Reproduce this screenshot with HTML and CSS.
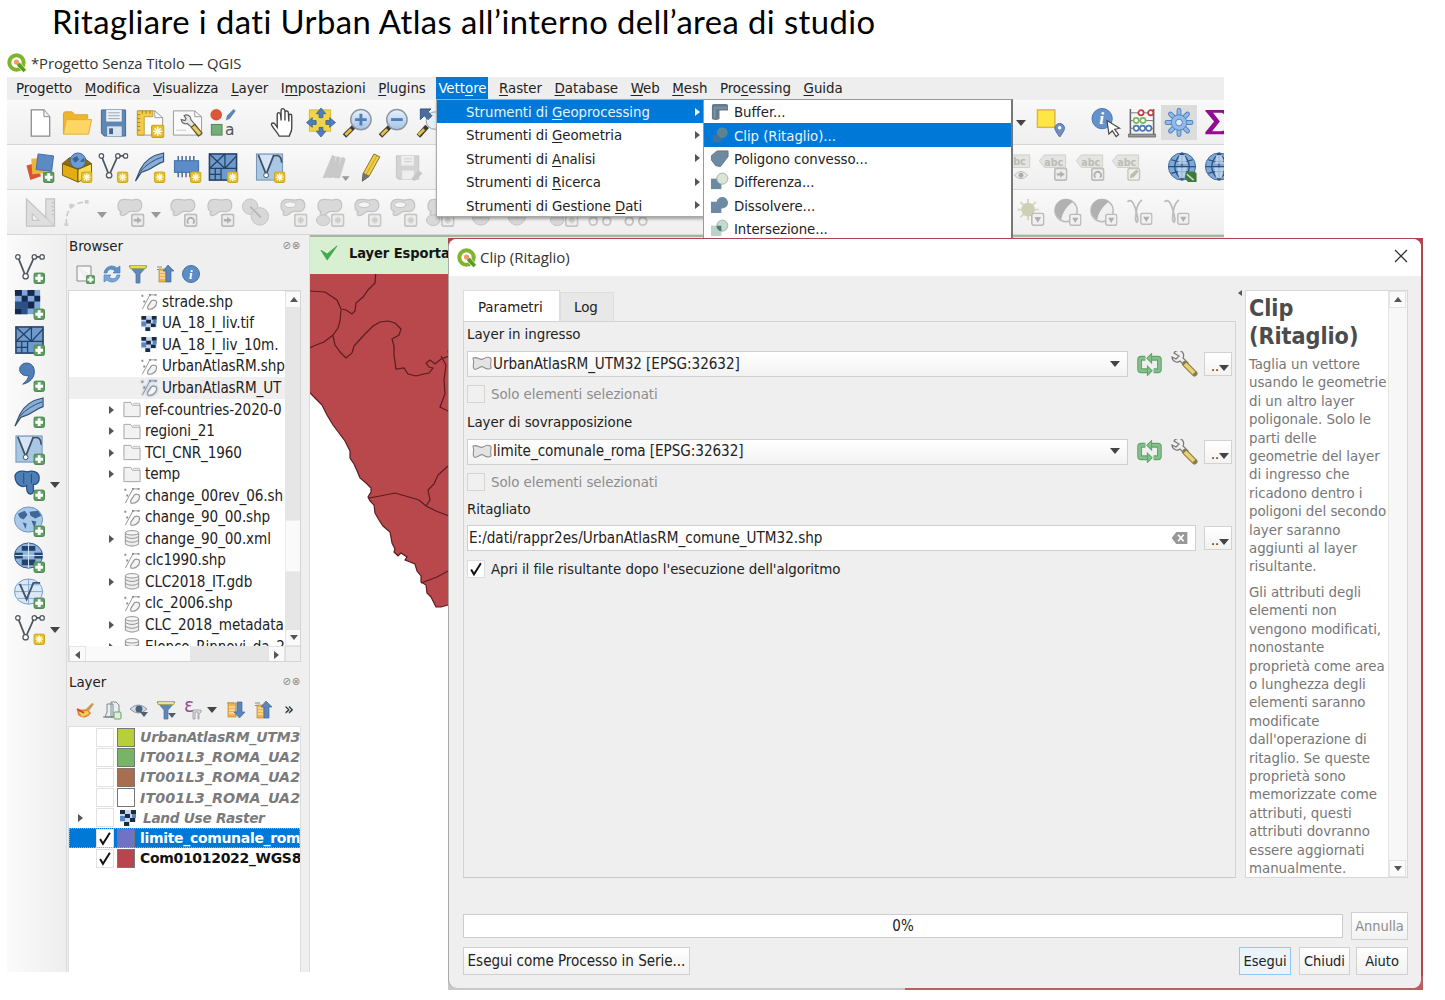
FILE: index.html
```html
<!DOCTYPE html>
<html lang="it">
<head>
<meta charset="utf-8">
<title>Ritagliare i dati Urban Atlas</title>
<link rel="stylesheet" href="styles.css">
</head>
<body>
<svg class="defs" aria-hidden="true">
  <defs>
    <linearGradient id="g-glass" x1="0" y1="0" x2="0" y2="1"><stop offset="0" stop-color="#e8f1fb"/><stop offset="1" stop-color="#a4c3e6"/></linearGradient>
  </defs>
  <symbol id="b-star" viewBox="0 0 12 12"><rect x=".5" y=".5" width="11" height="11" rx="2" fill="#e3bf2d" stroke="#c9a31c"/><path d="M6 2v8M2 6h8M3.2 3.2l5.6 5.6M8.8 3.2L3.2 8.8" stroke="#fffbe0" stroke-width="1.4"/></symbol>
  <symbol id="b-plus" viewBox="0 0 12 12"><rect x=".5" y=".5" width="11" height="11" rx="2" fill="#5f9e62" stroke="#4a8450"/><path d="M6 2v8M2 6h8" stroke="#fff" stroke-width="3"/></symbol>
  <symbol id="b-gray" viewBox="0 0 12 12"><rect x=".7" y=".7" width="10.6" height="10.6" rx="2" fill="#ededed" stroke="#c6c6c2" stroke-width="1.6"/><path d="M6 3v6M3 6h6M4 4l4 4M8 4l-4 4" stroke="#cfcfc8" stroke-width="1.200"/></symbol>
  <symbol id="b-arrow" viewBox="0 0 12 12"><rect x=".7" y=".7" width="10.6" height="10.6" rx="2" fill="#ececec" stroke="#bdbdbd" stroke-width="1.6"/><path d="M2.500 5h3V3l4 3-4 3V7h-3z" fill="#b0b0b0"/></symbol>
  <symbol id="b-down" viewBox="0 0 12 12"><rect x=".7" y=".7" width="10.6" height="10.6" rx="2" fill="#f1f1f1" stroke="#bbb" stroke-width="1.4"/><path d="M3 4h6L6 9z" fill="#b0b0b0"/></symbol>
  <symbol id="b-rot" viewBox="0 0 12 12"><rect x=".7" y=".7" width="10.6" height="10.6" rx="2" fill="#eeeeee" stroke="#bdbdbd" stroke-width="1.6"/><path d="M4 9a3 3 0 1 1 4 0" fill="none" stroke="#b0b0b0" stroke-width="1.600"/></symbol>
  <symbol id="qgis" viewBox="0 0 20 20"><circle cx="9.500" cy="9.500" r="7.200" fill="none" stroke="#7fb52d" stroke-width="4"/><path d="M9 9l4 .5L19.500 17l-3 2.500L10 13z" fill="#5d9a2c" stroke="#fff" stroke-width=".6"/><circle cx="9.500" cy="9" r="2.600" fill="#ee9b62"/></symbol>

  <symbol id="new" viewBox="0 0 32 32"><path d="M7 3h13l6 7v20H7z" fill="#fff" stroke="#8a8a8a" stroke-width="1.300"/><path d="M20 3v7h6" fill="#eee" stroke="#8a8a8a"/></symbol>
  <symbol id="open" viewBox="0 0 32 32"><path d="M2 28V7q0-2 2-2h7l3 3h13v4" fill="#f0b52c" stroke="#d9a32e"/><path d="M2 28L5 13h26l-3 15z" fill="#fdd663" stroke="#dfae35"/></symbol>
  <symbol id="save" viewBox="0 0 32 32"><path d="M4 3h25v27H7l-3-3z" fill="#5d87b5" stroke="#43699a"/><rect x="9" y="3" width="16" height="12" fill="#edf1f5"/><path d="M11 6h12M11 9h12M11 12h12" stroke="#9aa6b3"/><rect x="10" y="20" width="15" height="10" fill="#dce4ee"/><rect x="12" y="22" width="4" height="6" fill="#41658f"/></symbol>
  <symbol id="layout" viewBox="0 0 32 32"><path d="M3 4h18l8 7v18H3z" fill="#fff" stroke="#999"/><path d="M21 4v7h8" fill="none" stroke="#999"/><path d="M3 4h16v6H10v19H3z" fill="#f3cd49" stroke="#c29e2b"/><path d="M3 8h3M3 12h3M3 16h3M3 20h3M3 24h3M8 4v3M12 4v3M16 4v3" stroke="#9a7d20"/><use href="#b-star" x="17" y="18" width="14" height="14"/></symbol>
  <symbol id="manage" viewBox="0 0 32 32"><path d="M2 4h22l7 6v19H2z" fill="#fafafa" stroke="#999"/><path d="M24 4v6h7" fill="none" stroke="#999"/><path d="M5 24h10" stroke="#ccc"/><path d="M13 9a4.500 4.500 0 0 1 7 4l4 5-3 3-5-4a4.500 4.500 0 0 1-6-4l4 1 1-2z" fill="#e6e6e6" stroke="#666" stroke-width="1.200"/><path d="M22 19l8 10" stroke="#5c5230" stroke-width="6"/><path d="M22.500 20l7 8" stroke="#e8ca62" stroke-width="3.500"/></symbol>
  <symbol id="hand" viewBox="0 0 32 32"><path d="M11 30c-2-4-7-9-8-12 0-2 3-2 4 0l2 3V8c0-3 3-3 3.500 0l.5 6V4c0-3 3.500-3 4 0v10V6c0-3 3.500-2 3.500 0l.5 9V9c0-2 3-2 3 0v13c0 4-2 5-2.500 8z" fill="#fff" stroke="#444" stroke-width="1.400"/></symbol>
  <symbol id="pan" viewBox="0 0 32 32"><rect x="4" y="3" width="22" height="22" fill="#f3d444" stroke="#d3b83b"/><path d="M16 1l5 6h-3v4h-4V7h-3zM16 31l5-6h-3v-4h-4v4h-3zM1 16l6-5v3h4v4H7v3zM31 16l-6-5v3h-4v4h4v3z" fill="#4c7dbc" stroke="#2f5a94" stroke-width=".7"/></symbol>
  <symbol id="zin" viewBox="0 0 32 32"><path d="M12 20L2 30" stroke="#3c3a33" stroke-width="5"/><path d="M9 23l-6 6" stroke="#e3c04b" stroke-width="3"/><circle cx="19" cy="13" r="10.500" fill="url(#g-glass)" stroke="#8d97a3" stroke-width="1.500"/><path d="M19 7v12M13 13h12" stroke="#4c7dbc" stroke-width="3"/></symbol>
  <symbol id="zout" viewBox="0 0 32 32"><path d="M12 20L2 30" stroke="#3c3a33" stroke-width="5"/><path d="M9 23l-6 6" stroke="#e3c04b" stroke-width="3"/><circle cx="19" cy="13" r="10.500" fill="url(#g-glass)" stroke="#8d97a3" stroke-width="1.500"/><path d="M13 13h12" stroke="#4c7dbc" stroke-width="3"/></symbol>
  <symbol id="zfull" viewBox="0 0 32 32"><path d="M12 20L3 30" stroke="#3c3a33" stroke-width="5"/><path d="M9 23l-6 6" stroke="#e3c04b" stroke-width="3"/><circle cx="20" cy="14" r="9" fill="#e6eef7" stroke="#999"/><path d="M5 2h11l-3 3 4 4-4 4-4-4-4 4zM31 2v10l-9-9z" fill="#4a6f9c" stroke="#34547c"/></symbol>
  <symbol id="note" viewBox="0 0 32 32"><rect x="3" y="3" width="18" height="18" fill="#ffe644" stroke="#d8b73a" stroke-width="1.500"/><path d="M26 31c-5-7-5-8-5-9a5 5 0 0 1 10 0c0 1 0 2-5 9z" fill="#6f8fc0" stroke="#4c6fa5"/><circle cx="26" cy="21.500" r="1.800" fill="#fff"/></symbol>
  <symbol id="abacus" viewBox="0 0 32 32"><path d="M4 2v28M28 2v28" stroke="#666" stroke-width="1.600"/><path d="M2 28h28v3H2z" fill="#999" stroke="#555" stroke-width=".7"/><path d="M4 6h24M4 14h24M4 22h24" stroke="#777"/><g fill="#fff" stroke-width="1.700"><g stroke="#c33a45"><circle cx="15" cy="6" r="2.700"/><circle cx="25" cy="6" r="2.700"/></g><g stroke="#73bb62"><circle cx="10" cy="14" r="2.700"/><circle cx="17" cy="14" r="2.700"/></g><g stroke="#4f78b4"><circle cx="10" cy="22" r="2.700"/><circle cx="16.500" cy="22" r="2.700"/><circle cx="23" cy="22" r="2.700"/></g></g></symbol>
  <symbol id="gear" viewBox="0 0 32 32"><g stroke="#4e83bf" stroke-width="5" stroke-linecap="round"><path d="M16 3.500v25M3.500 16h25M7.200 7.200l17.600 17.600M24.800 7.200L7.200 24.800"/></g><g stroke="#90bbe8" stroke-width="3" stroke-linecap="round"><path d="M16 3.500v25M3.500 16h25M7.200 7.200l17.600 17.600M24.800 7.200L7.200 24.800"/></g><circle cx="16" cy="16" r="8" fill="#90bbe8" stroke="#4e83bf"/><circle cx="16" cy="16" r="3.500" fill="#dfeaf5" stroke="#4e83bf"/></symbol>
  <symbol id="sigma" viewBox="0 0 32 32"><path d="M5 3h22v7h-2c-1-4-2-4-5-4h-7l7 9-8 10h9c3 0 4-1 6-5h2l-2 8H5v-2l9-11-9-11z" fill="#930a93"/></symbol>

  <symbol id="dsm" viewBox="0 0 32 32"><path d="M2 14l11-3 4 14-11 4z" fill="#d9542f"/><path d="M7 7l13-1 1 16-13 1z" fill="#eab53c"/><path d="M14 2l16 2-2 16-16-2z" fill="#5c8ac4" stroke="#4370a9"/><use href="#b-plus" x="19" y="20" width="12" height="12"/></symbol>
  <symbol id="gpkg" viewBox="0 0 32 32"><path d="M1 12l7-6h15l8 6-14 6z" fill="#8d6d12" stroke="#6f5711"/><circle cx="17" cy="9" r="8" fill="#6f9bd1" stroke="#3d6597"/><path d="M11 7l5-3 2 4-4 3zM19 10l4-4 1 4z" fill="#3b618f"/><path d="M1 12l16 6v13L1 24z" fill="#e3ad12" stroke="#6f5711"/><path d="M17 18l14-6v12l-14 7z" fill="#f7dd52" stroke="#6f5711"/><use href="#b-star" x="20" y="20" width="12" height="12"/></symbol>
  <symbol id="vec" viewBox="0 0 32 32"><path d="M4 4l8 20L21 4h8" fill="none" stroke="#4d565e" stroke-width="1.800"/><g fill="#fff" stroke="#4d565e" stroke-width="1.300"><circle cx="4" cy="4" r="2.300"/><circle cx="12" cy="24" r="2.800"/><circle cx="21" cy="4" r="2.300"/><circle cx="29" cy="4" r="2.300"/></g></symbol>
  <symbol id="vec-star" viewBox="0 0 32 32"><use href="#vec"/><use href="#b-star" x="20" y="20" width="12" height="12"/></symbol>
  <symbol id="vec-plus" viewBox="0 0 32 32"><use href="#vec"/><use href="#b-plus" x="20" y="20" width="12" height="12"/></symbol>
  <symbol id="feather" viewBox="0 0 32 32"><path d="M1 30L6 18C11 8 19 3 30 1v9C22 12 20 18 7 21z" fill="#88aed9" stroke="#34526f" stroke-width="1.200"/><path d="M6 20C12 13 20 8 29 5" fill="none" stroke="#34526f"/></symbol>
  <symbol id="feather-star" viewBox="0 0 32 32"><use href="#feather"/><use href="#b-star" x="20" y="20" width="12" height="12"/></symbol>
  <symbol id="feather-plus" viewBox="0 0 32 32"><use href="#feather"/><use href="#b-plus" x="20" y="20" width="12" height="12"/></symbol>
  <symbol id="chip" viewBox="0 0 32 32"><path d="M7 4v22M11 4v22M15 4v22M19 4v22M23 4v22" stroke="#4d6f98" stroke-width="1.600"/><rect x="3" y="9" width="25" height="12" fill="#5b8cc8" stroke="#3f6ca3"/><use href="#b-star" x="19" y="20" width="12" height="12"/></symbol>
  <symbol id="mesh" viewBox="0 0 32 32"><rect x="2" y="2" width="28" height="27" fill="#6d9bd0" stroke="#26415f" stroke-width="1.600"/><path d="M2 17h28M18 2v15M14 17v12M2 2l16 15M18 2L2 17M18 17L30 4M2 23h12M8 17v12" stroke="#26415f" stroke-width="1.300" fill="none"/></symbol>
  <symbol id="mesh-star" viewBox="0 0 32 32"><use href="#mesh"/><use href="#b-star" x="20" y="20" width="12" height="12"/></symbol>
  <symbol id="mesh-plus" viewBox="0 0 32 32"><use href="#mesh"/><use href="#b-plus" x="20" y="20" width="12" height="12"/></symbol>
  <symbol id="virt" viewBox="0 0 32 32"><rect x="2" y="2" width="27" height="27" fill="#a9c6e4" stroke="#7393b3"/><path d="M4 3l8 20L20 3" fill="#d5e4f4" stroke="#3e5063" stroke-width="1.800"/><path d="M20 4q8-2 8 7" fill="none" stroke="#3e5063" stroke-width="1.500"/><circle cx="12" cy="24" r="2.500" fill="#fff" stroke="#3e5063"/></symbol>
  <symbol id="virt-star" viewBox="0 0 32 32"><use href="#virt"/><use href="#b-star" x="20" y="20" width="12" height="12"/></symbol>
  <symbol id="virt-plus" viewBox="0 0 32 32"><use href="#virt"/><use href="#b-plus" x="20" y="20" width="12" height="12"/></symbol>
  <symbol id="edits" viewBox="0 0 32 32"><path d="M2 27L12 3l4 2-6 21zM8 27L17 4l4 2-6 20zM14 27l8-22 4 2-6 20z" fill="#c9c9c9"/><path d="M22 25h8l-4 5z" fill="#999"/></symbol>
  <symbol id="pencil" viewBox="0 0 32 32"><path d="M5 30l1-8L17 2l6 3-11 20z" fill="#f0cf45" stroke="#85712a"/><path d="M5 30l1-8 6 3z" fill="#777" stroke="#666"/><path d="M9 23L20 4" stroke="#c09f27"/></symbol>
  <symbol id="saveg" viewBox="0 0 32 32"><path d="M3 4h23v24H5l-2-2z" fill="#d3d3d3" stroke="#c4c4c4"/><path d="M8 4h13v10H8zM9 19h12v9H9z" fill="#eee"/><path d="M11 7h8M11 10h8" stroke="#ccc"/><path d="M18 28l8-9 4 3-8 8z" fill="#c7c7c7"/></symbol>

  <symbol id="tri" viewBox="0 0 32 32"><path d="M2 2l20 19V2h9v28H2z" fill="#dedede" stroke="#c2c2c2" stroke-width="1.200"/><path d="M22 21l9 9" stroke="#c2c2c2"/><path d="M8 17v7h7z" fill="#f2f2f2" stroke="#bdbdbd"/><path d="M28 6h3M28 10h3M28 14h3M28 18h3" stroke="#bdbdbd"/></symbol>
  <symbol id="curve" viewBox="0 0 32 32"><path d="M5 29C4 14 10 6 26 5" fill="none" stroke="#c9c9c9" stroke-dasharray="6 3" stroke-width="1.600"/><path d="M3 27h4v3H3zM24 3h4v4h-4zM8 7h4v4H8z" fill="#cfcfcf"/></symbol>
  <symbol id="blob" viewBox="0 0 32 32"><path d="M7 3c4-2 8 1 12 0s8-1 9 4-2 8-6 8-6-1-8 1-4 4-7 3c-2-1-1-3 0-4-4-1-5-9 0-12z" fill="#d9d9d9" stroke="#c3c3c3" stroke-width="1.300"/></symbol>
  <symbol id="blob-arrow" viewBox="0 0 32 32"><use href="#blob"/><use href="#b-arrow" x="17" y="17" width="14" height="14"/></symbol>
  <symbol id="blob-rot" viewBox="0 0 32 32"><use href="#blob"/><use href="#b-rot" x="17" y="17" width="14" height="14"/></symbol>
  <symbol id="blob-gray" viewBox="0 0 32 32"><use href="#blob"/><use href="#b-arrow" x="17" y="17" width="14" height="14"/></symbol>
  <symbol id="simpl" viewBox="0 0 32 32"><circle cx="10" cy="10" r="8" fill="#d8d8d8" stroke="#c4c4c4"/><circle cx="20" cy="20" r="9" fill="#d8d8d8" stroke="#c4c4c4"/><path d="M10 10l11 11" stroke="#b5b5b5" stroke-width="2"/></symbol>
  <symbol id="ring" viewBox="0 0 32 32"><use href="#blob"/><ellipse cx="13" cy="8" rx="6" ry="3" fill="#f4f4f4" stroke="#c2c2c2"/><use href="#b-gray" x="17" y="17" width="14" height="14"/></symbol>
  <symbol id="part" viewBox="0 0 32 32"><use href="#blob"/><ellipse cx="9" cy="24" rx="7" ry="5.500" fill="#d8d8d8" stroke="#c2c2c2"/><use href="#b-gray" x="17" y="17" width="14" height="14"/></symbol>
  <symbol id="cut" viewBox="0 0 32 32"><circle cx="8" cy="25" r="4" fill="none" stroke="#c5c5c5" stroke-width="2"/><circle cx="22" cy="25" r="4" fill="none" stroke="#c5c5c5" stroke-width="2"/><path d="M10 22L22 4M20 22L9 4" stroke="#c5c5c5" stroke-width="2"/></symbol>
  <symbol id="tag" viewBox="0 0 32 32"><path d="M2 9l5-6h22v13H7z" fill="#e4e4e0" stroke="#cfcfcb"/></symbol>
  <symbol id="globe" viewBox="0 0 32 32"><circle cx="16" cy="15" r="14" fill="#7eaadb" stroke="#3e6796"/><path d="M2 15h28M5 8q11 4 22 0M5 22q11-4 22 0M16 1v28M16 1q-15 14 0 28M16 1q15 14 0 28" fill="none" stroke="#2c4d77" stroke-width="1.300"/><path d="M13 3h6l2 9h-9zM11 16h10l-2 11h-6z" fill="#cfe1f4" opacity=".7"/></symbol>
  <symbol id="globe-plug" viewBox="0 0 32 32"><use href="#globe"/><path d="M20 20h9l2 2v9h-9l-3-4z" fill="#3f7a3f"/><path d="M21 23l7 6" stroke="#cde5c6" stroke-width="1.500"/></symbol>
  <symbol id="sun" viewBox="0 0 32 32"><g stroke="#d6d6c2" stroke-width="2"><path d="M13 2v22M2 13h22M5 5l16 16M21 5L5 21"/></g><circle cx="13" cy="13" r="7" fill="#cfcfb4"/><use href="#b-down" x="16" y="16" width="14" height="14"/></symbol>
  <symbol id="contrast" viewBox="0 0 32 32"><circle cx="14" cy="14" r="11.500" fill="#f0f0f0" stroke="#bbb" stroke-width="1.500"/><path d="M5 20A11 11 0 0 1 21 5C14 10 10 17 9 24z" fill="#b1b1b1"/><use href="#b-down" x="17" y="17" width="13" height="13"/></symbol>
  <symbol id="gamma" viewBox="0 0 32 32"><path d="M2 5c4-4 7 2 9 10 0 5-2 10 1 11 2-2 0-8-1-11 1-6 3-10 6-12" fill="none" stroke="#bdbdbd" stroke-width="1.800"/><use href="#b-down" x="15" y="16" width="13" height="13"/></symbol>

  <symbol id="raster" viewBox="0 0 32 32"><rect x="1" y="1" width="26" height="25" fill="#7ea8dc"/><path d="M1 1h7v6H1zM14 1h7v6h-7zM8 7h6v6H8zM14 13h-6v7h6zM1 13h7v7H1zM8 20h6v6H8z" fill="#2c4f86"/><path d="M1 1h7v6H1zM14 1h7v6h-7zM8 7h6v6H8zM21 7h6v6h-6zM14 13h7v7h-7zM1 20h7v6H1z" fill="#16294b"/><use href="#b-plus" x="20" y="20" width="12" height="12"/></symbol>
  <symbol id="comma" viewBox="0 0 32 32"><path d="M6 7c2-7 15-7 15 4 0 6-4 11-12 13 4-4 6-6 6-9-6 1-10-3-9-8z" fill="#4f7fb8" stroke="#33598a"/><use href="#b-plus" x="20" y="20" width="12" height="12"/></symbol>
  <symbol id="pg" viewBox="0 0 32 32"><path d="M1 6c2-6 9-5 13-4 5-2 12 0 12 6 0 5-3 7-6 7 0 6 1 9-3 10-4-1-4-5-4-9-5 3-12-1-12-10z" fill="#4d7eb6" stroke="#27507f" stroke-width="1.300"/><path d="M10 3v11M18 4v10" stroke="#27507f"/><use href="#b-plus" x="20" y="20" width="12" height="12"/></symbol>
  <symbol id="wms" viewBox="0 0 32 32"><ellipse cx="15" cy="14" rx="14.500" ry="13" fill="#a9c9ea" stroke="#6c93bf"/><path d="M4 8l7-3 3 4-4 5-4-2zM16 6l9-1 3 5-6 3-5-3zM9 17l4 1-1 6zM18 15l5 1-2 7z" fill="#3e6897"/><use href="#b-plus" x="20" y="20" width="12" height="12"/></symbol>
  <symbol id="wcs" viewBox="0 0 32 32"><ellipse cx="15" cy="14" rx="14.500" ry="13" fill="#8db5e0" stroke="#33577f"/><path d="M8 4h14v5H8zM1 11h8v6H1zM21 11h8v6h-8zM8 18h14v6H8z" fill="#22436c"/><path d="M1 14h29M15 1v26" stroke="#d9e7f6"/><use href="#b-plus" x="20" y="20" width="12" height="12"/></symbol>
  <symbol id="wfs" viewBox="0 0 32 32"><ellipse cx="15" cy="14" rx="14.500" ry="13" fill="#dbe9f7" stroke="#6f9bcb"/><path d="M1 14h29M15 1v26M4 7h22M4 21h22" stroke="#7fa8d6" fill="none"/><path d="M6 6l7 16L20 5h7" fill="none" stroke="#41566b" stroke-width="2"/><use href="#b-plus" x="20" y="20" width="12" height="12"/></symbol>

  <symbol id="s-add" viewBox="0 0 20 20"><path d="M2 2h14v9M11 17H2V2" fill="#f7f7f7" stroke="#8b8b8b"/><use href="#b-plus" x="11" y="11" width="9" height="9"/></symbol>
  <symbol id="s-refresh" viewBox="0 0 20 20"><path d="M2 9C3 2 11 0 15 4l3-2v7h-7l2-2C9 4 6 5 5 9z" fill="#5d90cf" stroke="#4878b4" stroke-width=".6"/><path d="M18 11c-1 7-9 9-13 5l-3 2v-7h7l-2 2c4 3 7 2 8-2z" fill="#7aa6dc" stroke="#4878b4" stroke-width=".6"/></symbol>
  <symbol id="s-filter" viewBox="0 0 20 20"><path d="M1 2h18l-7 8v9H8v-9z" fill="#6187b6" stroke="#4b719f" stroke-width=".7"/><path d="M2 1.500h16v3H2z" fill="#e9dd3f" stroke="#a9a136" stroke-width=".7"/></symbol>
  <symbol id="s-filter-dd" viewBox="0 0 20 20"><path d="M1 2h18l-7 8v9H8v-9z" fill="#6187b6" stroke="#4b719f" stroke-width=".7"/><path d="M2 1.500h16v3H2z" fill="#e6e2a0" stroke="#a9a136" stroke-width=".7"/><path d="M12 13h8l-4 5z" fill="#555e68"/></symbol>
  <symbol id="s-collapse" viewBox="0 0 20 20"><path d="M2 3h5M2 5.500h2" stroke="#888"/><rect x="4" y="5" width="7" height="13" fill="#f0b24b" stroke="#b98a3a" stroke-width=".7"/><path d="M5 8h5M5 11h5M5 14h5" stroke="#fff4d6"/><path d="M13 1l6 6h-3v11h-5V7H8z" fill="#5b86ba" stroke="#426a9b" stroke-width=".7"/></symbol>
  <symbol id="s-expand" viewBox="0 0 20 20"><path d="M1 3h7" stroke="#888"/><rect x="2" y="3" width="8" height="14" fill="#f0b24b" stroke="#b98a3a" stroke-width=".7"/><path d="M3 7h6M3 10h6M3 13h6" stroke="#fff4d6"/><path d="M11 2h5v10h3l-5.500 6L8 12h3z" fill="#5b86ba" stroke="#426a9b" stroke-width=".7"/></symbol>
  <symbol id="s-brush" viewBox="0 0 20 20"><path d="M2 10c4-1 5 0 10-1l4 4c-3 5-9 6-13 2z" fill="#e5823b"/><path d="M4 12l9-1 1 3-7 3z" fill="#f1d252"/><path d="M2 9l7 4" stroke="#d4452f" stroke-width="2"/><path d="M11 9l6-6 2 1-5 7z" fill="#c99b55"/></symbol>
  <symbol id="s-group" viewBox="0 0 20 20"><path d="M5 4h6v13H3l2-5zM9 2h5l3 3v12H9z" fill="#e9eef0" stroke="#7e8c90"/><path d="M1 17h10" stroke="#777"/><rect x="12" y="12" width="7" height="7" rx="1" fill="#dcefd9" stroke="#6d9f6d"/></symbol>
  <symbol id="s-eye" viewBox="0 0 20 20"><path d="M1 9q8-8 17 0q-8 8-17 0z" fill="#d8dee5" stroke="#8794a3"/><circle cx="10" cy="9" r="3.500" fill="#49637f"/><path d="M11 12h8l-4 5z" fill="#555e68"/></symbol>

  <symbol id="t-shp" viewBox="0 0 20 20"><path d="M3 18L11 3h6" fill="none" stroke="#929292"/><path d="M9 18c-2-4 2-5 3-8 1-2 6-2 6 1 0 4-4 8-9 7z" fill="#f4f4f4" stroke="#929292" stroke-width="1.200"/><path d="M2 3h2v2H2zM4 9h2v2H4zM10 2h2v2h-2zM16 2h2v2h-2z" fill="#8a8a8a"/></symbol>
  <symbol id="t-ras" viewBox="0 0 20 20"><rect x="2" y="2" width="16" height="16" fill="#c3d6eb"/><path d="M2 2h5v4H2zM13 2h5v4h-5zM7 6h5v4H7zM12 10h5v4h-5zM6 14h5v4H6z" fill="#1a2b45"/><path d="M2 8h5v5H2zM14 6h4v4h-4z" fill="#5986c0"/><path d="M12 14h6v4h-6zM2 14h4v4H2z" fill="#fff"/></symbol>
  <symbol id="t-dir" viewBox="0 0 20 20"><path d="M1.500 17.500V2.500h7l2 3h8v12z" fill="#f2f2f2" stroke="#a2a2a2"/><path d="M11 3.500h7v2" fill="none" stroke="#bbb"/></symbol>
  <symbol id="t-db" viewBox="0 0 20 20"><path d="M3 4v12q7 4 14 0V4" fill="#eee" stroke="#909090"/><ellipse cx="10" cy="4" rx="7" ry="2.300" fill="#f7f7f7" stroke="#909090"/><path d="M3 8q7 4 14 0M3 12q7 4 14 0" fill="none" stroke="#909090"/></symbol>

  <symbol id="m-buffer" viewBox="0 0 20 20"><path d="M2 4q0-2 2-2h13q2 0 2 2v5h-9v9q-4 2-8 0z" fill="#647c8c"/><path d="M5 17V6h13" fill="none" stroke="#7c929f" stroke-width="2"/></symbol>
  <symbol id="m-clip" viewBox="0 0 20 20"><path d="M3 9h9v8H3z" fill="#3f7398"/><circle cx="13" cy="7" r="5" fill="#5d8388" stroke="#5f8ba2"/></symbol>
  <symbol id="m-hull" viewBox="0 0 20 20"><path d="M1.500 7l6-5H19v6l-8 10.500-5-1-4.500-6z" fill="#6e8aa3" stroke="#637582"/></symbol>
  <symbol id="m-diff" viewBox="0 0 20 20"><rect x="1" y="7" width="11" height="11" fill="#6c8aa3"/><circle cx="13" cy="7" r="5.800" fill="#d9e6d6" stroke="#9fb09f"/></symbol>
  <symbol id="m-diss" viewBox="0 0 20 20"><path d="M1 6h6a6 6 0 1 1 5 7v5H1z" fill="#6c8aa3"/></symbol>
  <symbol id="m-inter" viewBox="0 0 20 20"><rect x="1" y="7" width="11" height="11" fill="#b9d2ca"/><circle cx="13" cy="7" r="5.800" fill="#c4dacf" stroke="#9fb3ab"/><path d="M7 7h5v6q-5-1-5-6z" fill="#4e7d76"/></symbol>

  <symbol id="poly" viewBox="0 0 20 14"><path d="M1.500 2c4-2 6 2 9 1 3-2 7-3 8 0 0 3-1 4 0 8-3 3-6 0-8-1s-6 4-8 2c-2-3 1-5-1-10z" fill="#e3e3e3" stroke="#8e8e8e"/></symbol>
  <symbol id="iter" viewBox="0 0 24 22"><path d="M8 5H4q-1.500 0-1.500 1.500v9Q2.500 17 4 17h7M16 17h4q1.500 0 1.500-1.500v-9Q21.500 5 20 5h-7" fill="none" stroke="#5fa568" stroke-width="4.600"/><path d="M8 5H4q-1.500 0-1.500 1.500v9Q2.500 17 4 17h7M16 17h4q1.500 0 1.500-1.500v-9Q21.500 5 20 5h-7" fill="none" stroke="#85bf8c" stroke-width="2.600"/><path d="M14 .5L9.500 5l4.500 4.500zM10 12.500l4.500 4.500-4.500 4.500z" fill="#85bf8c" stroke="#5fa568"/></symbol>
  <symbol id="wrench" viewBox="0 0 26 26"><path d="M3 2a5 5 0 0 1 9 5l5 5-3 3-5-5a5 5 0 0 1-8-4l4 2 3-3z" fill="#eee" stroke="#777" stroke-width="1.200"/><path d="M14 13l9.500 9.500" stroke="#8a7c4e" stroke-width="6" stroke-linecap="round"/><path d="M14 13l9 9" stroke="#ecd36e" stroke-width="3.800"/></symbol>
  <symbol id="check" viewBox="0 0 18 18"><path d="M3.500 9.500l3.200 5.500L14.500 2.500" fill="none" stroke="#111" stroke-width="2.200"/></symbol>
</svg>

<h1 class="slide-title">Ritagliare i dati Urban Atlas all’interno dell’area di studio</h1>

<div class="app">
  <header class="app-title"><svg class="qlogo"><use href="#qgis"/></svg><span>*Progetto Senza Titolo — QGIS</span></header>
  <nav class="menubar">
    <span>P<u>r</u>ogetto</span><span><u>M</u>odifica</span><span><u>V</u>isualizza</span><span><u>L</u>ayer</span><span>I<u>m</u>postazioni</span><span><u>P</u>lugins</span><span class="active">Vett<u>o</u>re</span><span><u>R</u>aster</span><span><u>D</u>atabase</span><span><u>W</u>eb</span><span><u>M</u>esh</span><span>Pro<u>c</u>essing</span><span><u>G</u>uida</span>
  </nav>
  <div class="toolbar">
    <svg><use href="#new"/></svg><svg><use href="#open"/></svg><svg><use href="#save"/></svg><svg><use href="#layout"/></svg><svg><use href="#manage"/></svg><svg viewBox="0 0 32 32"><circle cx="9" cy="8" r="6" fill="#dd5538"/><path d="M19 14l1-5 7-7 2 2-6 8z" fill="#5d87b5"/><rect x="4" y="18" width="11" height="11" fill="#74ae79" stroke="#4f8757"/><text x="18" y="29" class="glyph">a</text></svg>
    <i class="sp sp-a"></i>
    <svg><use href="#hand"/></svg><svg><use href="#pan"/></svg><svg><use href="#zin"/></svg><svg><use href="#zout"/></svg><svg><use href="#zfull"/></svg>
    <div class="right-tools r1"><b class="dd"></b><svg><use href="#note"/></svg><i class="sp sp-b"></i><svg viewBox="0 0 32 32"><circle cx="12" cy="12" r="10.500" fill="#6592cc" stroke="#4978b3"/><text x="9" y="18" class="info-i">i</text><path d="M17 14l2 14 3.500-3.500 4 6 2.500-2-4-5.500 5-1z" fill="#fff" stroke="#444" stroke-width="1.200"/></svg><svg><use href="#abacus"/></svg><svg class="pressed"><use href="#gear"/></svg><svg><use href="#sigma"/></svg></div>
  </div>
  <div class="toolbar">
    <svg><use href="#dsm"/></svg><svg><use href="#gpkg"/></svg><svg><use href="#vec-star"/></svg><svg><use href="#feather-star"/></svg><svg><use href="#chip"/></svg><svg><use href="#mesh-star"/></svg>
    <i class="sp sp-c"></i>
    <svg><use href="#virt-star"/></svg>
    <i class="sp sp-d"></i>
    <svg><use href="#edits"/></svg><svg><use href="#pencil"/></svg><svg><use href="#saveg"/></svg>
    <div class="right-tools r2"><svg viewBox="0 0 32 32"><path d="M2 3h24v13H2z" fill="#e4e4e0" stroke="#cfcfcb"/><text x="9" y="13" class="abc">bc</text><path d="M10 24q7-8 14 0q-7 7-14 0z" fill="#e9e9ee" stroke="#bbb"/><circle cx="17" cy="24" r="2.500" fill="#aaa"/></svg><svg viewBox="0 0 32 32"><use href="#tag"/><text x="7" y="14" class="abc">abc</text><use href="#b-arrow" x="17" y="16" width="14" height="14"/></svg><svg viewBox="0 0 32 32"><use href="#tag"/><text x="7" y="14" class="abc">abc</text><use href="#b-rot" x="17" y="16" width="14" height="14"/></svg><svg viewBox="0 0 32 32"><use href="#tag"/><text x="7" y="14" class="abc">abc</text><rect x="18" y="17" width="12" height="12" rx="2" fill="#eee" stroke="#c4c4b8" stroke-width="1.400"/><path d="M20 27l1-4 6-5 2 2-5 6z" fill="#bdbdac"/></svg><i class="sp sp-b"></i><svg><use href="#globe-plug"/></svg><svg><use href="#globe"/></svg></div>
  </div>
  <div class="toolbar third">
    <svg><use href="#tri"/></svg><svg><use href="#curve"/></svg><b class="dd pale"></b><svg><use href="#blob-arrow"/></svg><b class="dd pale"></b><svg><use href="#blob-rot"/></svg><svg><use href="#blob-gray"/></svg><svg><use href="#simpl"/></svg><svg><use href="#ring"/></svg><svg><use href="#part"/></svg><svg><use href="#ring"/></svg><svg><use href="#ring"/></svg><svg><use href="#part"/></svg><svg><use href="#simpl"/></svg><svg><use href="#simpl"/></svg><i class="sp sp-e"></i><svg><use href="#part"/></svg><svg><use href="#cut"/></svg><svg><use href="#cut"/></svg>
    <div class="right-tools r3"><svg><use href="#sun"/></svg><svg><use href="#contrast"/></svg><svg><use href="#contrast"/></svg><svg><use href="#gamma"/></svg><svg><use href="#gamma"/></svg></div>
  </div>

  <div class="workspace">
    <aside class="layer-tools">
      <div><svg><use href="#vec-plus"/></svg></div><div><svg><use href="#raster"/></svg></div><div><svg><use href="#mesh-plus"/></svg></div><div><svg><use href="#comma"/></svg></div><div><svg><use href="#feather-plus"/></svg></div><div><svg><use href="#virt-plus"/></svg></div><div><svg><use href="#pg"/></svg><b class="dd"></b></div><div><svg><use href="#wms"/></svg></div><div><svg><use href="#wcs"/></svg></div><div><svg><use href="#wfs"/></svg></div><div><svg><use href="#vec-star"/></svg><b class="dd"></b></div>
    </aside>

    <section class="docks">
      <div class="dock-title"><span>Browser</span><em><i>⊘</i><i>⊗</i></em></div>
      <div class="dock-tools"><svg><use href="#s-add"/></svg><svg><use href="#s-refresh"/></svg><svg><use href="#s-filter"/></svg><svg><use href="#s-collapse"/></svg><svg viewBox="0 0 20 20"><circle cx="10" cy="10" r="8.500" fill="#5c8cc4" stroke="#4675ab"/><text x="8" y="14.500" class="info-s">i</text></svg></div>
      <div class="browser-box">
        <ul class="tree">
          <li class="deep"><svg><use href="#t-shp"/></svg>strade.shp</li>
          <li class="deep"><svg><use href="#t-ras"/></svg>UA_18_I_liv.tif</li>
          <li class="deep"><svg><use href="#t-ras"/></svg>UA_18_I_liv_10m.</li>
          <li class="deep"><svg><use href="#t-shp"/></svg>UrbanAtlasRM.shp</li>
          <li class="deep hover"><svg class="tint"><use href="#t-shp"/></svg>UrbanAtlasRM_UT</li>
          <li class="exp"><svg><use href="#t-dir"/></svg>ref-countries-2020-0</li>
          <li class="exp"><svg><use href="#t-dir"/></svg>regioni_21</li>
          <li class="exp"><svg><use href="#t-dir"/></svg>TCI_CNR_1960</li>
          <li class="exp"><svg><use href="#t-dir"/></svg>temp</li>
          <li><svg><use href="#t-shp"/></svg>change_00rev_06.sh</li>
          <li><svg><use href="#t-shp"/></svg>change_90_00.shp</li>
          <li class="exp"><svg><use href="#t-db"/></svg>change_90_00.xml</li>
          <li><svg><use href="#t-shp"/></svg>clc1990.shp</li>
          <li class="exp"><svg><use href="#t-db"/></svg>CLC2018_IT.gdb</li>
          <li><svg><use href="#t-shp"/></svg>clc_2006.shp</li>
          <li class="exp"><svg><use href="#t-db"/></svg>CLC_2018_metadata</li>
          <li class="exp"><svg><use href="#t-db"/></svg>Elenco_Rinnovi_da_201</li>
        </ul>
        <div class="vbar"><b class="btn-up"></b><span class="vthumb"></span><b class="btn-down"></b></div>
        <div class="hbar"><b class="btn-left"></b><span class="hthumb"></span><b class="btn-right"></b></div>
        <div class="corner"></div>
      </div>

      <div class="dock-title layer-title"><span>Layer</span><em><i>⊘</i><i>⊗</i></em></div>
      <div class="dock-tools layer-toolbar"><svg><use href="#s-brush"/></svg><svg><use href="#s-group"/></svg><svg><use href="#s-eye"/></svg><svg><use href="#s-filter-dd"/></svg><svg viewBox="0 0 20 20"><text x="1" y="12" class="eps">ε</text><path d="M10 10h8v2l-2 2v5h-1v-7h-3v7h-2z" fill="#ddd" stroke="#999" stroke-width=".8"/></svg><b class="dd"></b><svg><use href="#s-expand"/></svg><svg><use href="#s-collapse"/></svg><span class="more">»</span></div>
      <ul class="layers">
        <li><b></b><i class="cb"></i><i class="sw lime"></i><span class="urban">UrbanAtlasRM_UTM3</span></li>
        <li><b></b><i class="cb"></i><i class="sw green"></i><span class="it">IT001L3_ROMA_UA2</span></li>
        <li><b></b><i class="cb"></i><i class="sw brown"></i><span class="it">IT001L3_ROMA_UA2</span></li>
        <li><b></b><i class="cb"></i><i class="sw"></i><span class="it">IT001L3_ROMA_UA2</span></li>
        <li><b class="tw"></b><i class="cb"></i><svg class="lras"><use href="#t-ras"/></svg><span class="group">Land Use Raster</span></li>
        <li class="selected"><b></b><i class="cb"><svg><use href="#check"/></svg></i><i class="sw violet"></i><span class="limit">limite_comunale_rom</span></li>
        <li class="visible"><b></b><i class="cb"><svg><use href="#check"/></svg></i><i class="sw red"></i><span class="com">Com01012022_WGS8</span></li>
      </ul>
    </section>

    <main class="canvas">
      <div class="message"><svg viewBox="0 0 20 18"><path d="M1 6l7 4L19 1 8 17z" fill="#35b24a" stroke="#3c9a48" stroke-width=".8"/></svg><strong>Layer Esporta</strong></div>
      <svg class="map" viewBox="310 273 140 699">
        <path class="land" d="M305 268V386L310 392L316 398 322 404 327 414 333 424 345 440 350 450 350 457 354 463 358 472 360 477 366 482 371 487 371 491 368 496 370 500 374 504 375 512 379 519 383 525 390 531 392 542 395 548 394 551 398 555 401 552 407 556 405 559 415 563 417 570 421 575 421 581 426 584 427 592 431 596 436 606 441 606 448 604 455 603V268z"/>
        <path d="M310 290l15 1 6 4 6 4 4 9 5 1 6 4 3-3 1-8 7-6 5-7 7-7 1-13M341 309l-1 11-2 7-5 7-9 7-8 3-7 3M333 335l2 9 6 8 5 5 6-5 2-7 10-11 9-9 7-4 8-1 7 2 6 6-2 6-7 4 2 7v9l2 14 8-1 4 6 8 2 8-2 5-1 4-5-4-1-3-4 4-3 5 4 6-5 8-3-1-5 4-4-2-4 2-4M441 355l5 9-2 15 1 14-5 13 8 4M369 497l11-2 15-3 14 4 10 3 7 6 10 5 13 5M426 505l4-6-2-10 6-6 4-9 10-9M421 582l16-6 11-6"/>
      </svg>
    </main>
  </div>
</div>

<div class="menu">
  <div class="sel">Strumenti di <u>G</u>eoprocessing</div>
  <div>Strumenti di <u>G</u>eometria</div>
  <div>Strumenti di <u>A</u>nalisi</div>
  <div>Strumenti di <u>R</u>icerca</div>
  <div>Strumenti di Gestione <u>D</u>ati</div>
</div>
<div class="submenu">
  <div><svg><use href="#m-buffer"/></svg>Buffer...</div>
  <div class="sel"><svg><use href="#m-clip"/></svg>Clip (Ritaglio)...</div>
  <div><svg><use href="#m-hull"/></svg>Poligono convesso...</div>
  <div><svg><use href="#m-diff"/></svg>Differenza...</div>
  <div><svg><use href="#m-diss"/></svg>Dissolvere...</div>
  <div><svg><use href="#m-inter"/></svg>Intersezione...</div>
</div>

<div class="dialog-frame">
<div class="dialog">
  <header class="dialog-title"><svg class="qlogo"><use href="#qgis"/></svg><span>Clip (Ritaglio)</span><svg class="close" viewBox="0 0 14 14"><path d="M1 1l12 12M13 1L1 13" stroke="#333" stroke-width="1.300"/></svg></header>
  <div class="dialog-body">
    <div class="upper">
      <div class="params">
        <div class="tabs"><span class="tab on">Parametri</span><span class="tab">Log</span></div>
        <div class="pane">
          <label class="lab">Layer in ingresso</label>
          <div class="field"><div class="combo"><svg><use href="#poly"/></svg>UrbanAtlasRM_UTM32 [EPSG:32632]<b class="dd"></b></div><svg class="f-iter"><use href="#iter"/></svg><svg class="f-wrench"><use href="#wrench"/></svg><div class="dots">..<b class="dd"></b></div></div>
          <div class="checkrow off"><i class="box"></i>Solo elementi selezionati</div>
          <label class="lab">Layer di sovrapposizione</label>
          <div class="field"><div class="combo"><svg><use href="#poly"/></svg>limite_comunale_roma [EPSG:32632]<b class="dd"></b></div><svg class="f-iter"><use href="#iter"/></svg><svg class="f-wrench"><use href="#wrench"/></svg><div class="dots">..<b class="dd"></b></div></div>
          <div class="checkrow off"><i class="box"></i>Solo elementi selezionati</div>
          <label class="lab">Ritagliato</label>
          <div class="field out"><div class="text-input">E:/dati/rappr2es/UrbanAtlasRM_comune_UTM32.shp<svg viewBox="0 0 17 13"><path d="M5 0h12v13H5L0 6.500z" fill="#989898"/><path d="M7 3l6 7M13 3l-6 7" stroke="#fff" stroke-width="1.800"/></svg></div><div class="dots">..<b class="dd"></b></div></div>
          <div class="checkrow"><i class="box"><svg><use href="#check"/></svg></i>Apri il file risultante dopo l'esecuzione dell'algoritmo</div>
        </div>
      </div>
      <div class="splitter"></div>
      <div class="help">
        <div class="help-text">
          <h2>Clip<br>(Ritaglio)</h2>
          <p>Taglia un vettore<br>usando le geometrie<br>di un altro layer<br>poligonale. Solo le<br>parti delle<br>geometrie del layer<br>di ingresso che<br>ricadono dentro i<br>poligoni del secondo<br>layer saranno<br>aggiunti al layer<br>risultante.</p>
          <p>Gli attributi degli<br>elementi non<br>vengono modificati,<br>nonostante<br>proprietà come area<br>o lunghezza degli<br>elementi saranno<br>modificate<br>dall'operazione di<br>ritaglio. Se queste<br>proprietà sono<br>memorizzate come<br>attributi, questi<br>attributi dovranno<br>essere aggiornati<br>manualmente.</p>
        </div>
        <div class="help-bar"><b class="btn-up"></b><b class="btn-down"></b></div>
      </div>
    </div>
    <div class="progress-row"><div class="progress">0%</div><button class="btn dis">Annulla</button></div>
    <div class="buttons"><button class="btn batch">Esegui come Processo in Serie...</button><button class="btn run">Esegui</button><button class="btn w2">Chiudi</button><button class="btn w3">Aiuto</button></div>
  </div>
</div>
</div>
</body>
</html>
```

FILE: styles.css
```css
* { box-sizing: border-box; }

body {
  margin: 0;
  width: 1445px;
  height: 1000px;
  overflow: hidden;
  position: relative;
  background: #fff;
  color: #222;
  font-family: "DejaVu Sans Condensed", "DejaVu Sans", sans-serif;
  font-stretch: condensed;
  font-size: 14.7px;
  letter-spacing: -0.05px;
  white-space: nowrap;
}

i, em { font-style: normal; }
u { text-underline-offset: 2px; text-decoration-thickness: 1px; }
ul { list-style: none; margin: 0; padding: 0; }
.defs { position: absolute; width: 0; height: 0; }

.glyph { font: 16px "DejaVu Sans", sans-serif; fill: #555; }
.abc { font: bold 11px "DejaVu Sans Condensed", sans-serif; letter-spacing: 0; fill: #bcbcb6; }
.info-i { font: italic bold 18px "Liberation Serif", serif; fill: #fff; }
.info-s { font: italic bold 13px "Liberation Serif", serif; fill: #fff; }
.eps { font: 19px "DejaVu Sans", sans-serif; fill: #96508f; }

/* small drop-down arrow */
.dd {
  flex: none;
  width: 0;
  height: 0;
  border: 5px solid transparent;
  border-top: 6px solid #444;
  border-bottom: 0;
}

.slide-title {
  margin: 0;
  height: 50px;
  padding: 0 0 5px 52px;
  font: 400 32.800px/43px Lato, "Open Sans", sans-serif;
  letter-spacing: 0.42px;
  color: #000;
}

/* ---------- main window ---------- */
.app {
  width: 1217px;
  height: 922px;
  margin-left: 7px;
  display: flex;
  flex-direction: column;
  overflow: hidden;
  background: #efefef;
}
.app-title {
  height: 27px;
  display: flex;
  align-items: center;
  gap: 4px;
  background: #fff;
  font: 14.800px/24px "Open Sans", sans-serif;
  padding-bottom: 2px;
  color: #333;
}
.qlogo { width: 20px; height: 20px; flex: none; }
.menubar {
  height: 23px;
  display: flex;
  align-items: center;
  padding-left: 7px;
  background: #eeeeee;
  line-height: 23px;
  font-size: 14.900px;
}
.menubar span { padding: 0 2px; margin-right: 8.600px; }
.menubar .active { background: #0078d7; color: #fff; }

.toolbar {
  position: relative;
  height: 45px;
  flex: none;
  display: flex;
  align-items: center;
  padding-left: 17px;
  border-bottom: 1px solid #d6d6d6;
  border-top: 1px solid #fbfbfb;
  background: linear-gradient(#f9f9f9, #efefef);
}
.toolbar svg { width: 32px; height: 31px; margin-right: 4.700px; flex: none; }
.toolbar .dd { margin: 4px 6.500px 0 0; }
.toolbar .pale { border-top-color: #999; }
.sp { flex: none; align-self: center; height: 30px; }
.sp-a { width: 24px; }
.sp-b { width: 19px; }
.sp-c { width: 10px; }
.sp-d { width: 29px; }
.sp-e { width: 14px; }
.right-tools {
  position: absolute;
  top: 0;
  left: 1005px;
  width: 212px;
  height: 43px;
  display: flex;
  align-items: center;
  overflow: hidden;
  background: linear-gradient(#f9f9f9, #efefef);
}
.r1 { padding-left: 5px; }
.r1 .dd { margin: 0 8px 0 -1px; }
.r1 .pressed { background: #dcdcdc; outline: 2px solid #dcdcdc; }
.r2 svg:first-child { margin-left: -8px; margin-right: 1px; }
.r3 { padding-left: 3px; }

.workspace { flex: 1; display: flex; min-height: 0; }
.layer-tools {
  width: 59px;
  padding: 15px 0 0 7px;
  background: linear-gradient(90deg, #fbfbfb, #eeeeee);
}
.layer-tools div { height: 36.200px; display: flex; align-items: center; gap: 5px; }
.layer-tools svg { width: 31px; height: 31px; }

.docks {
  width: 244px;
  display: flex;
  flex-direction: column;
  padding: 0 9px 0 2px;
  border-left: 1px solid #dadada;
  border-right: 1px solid #ddd;
  background: #efefef;
}
.dock-title {
  height: 21px;
  margin-bottom: 2px;
  flex: none;
  display: flex;
  justify-content: space-between;
  align-items: center;
  font-size: 14.900px;
}
.dock-title em { font-size: 11px; line-height: 16px; color: #888; display: flex; gap: 1px; }
.dock-tools { height: 32px; flex: none; display: flex; align-items: center; padding-left: 6px; gap: 6.500px; }
.dock-tools svg { width: 20px; height: 20px; flex: none; }
.browser-box {
  width: 233px;
  height: 372px;
  flex: none;
  margin-left: -1px;
  display: grid;
  grid-template-columns: 216px 17px;
  grid-template-rows: 355px 17px;
  border: 1px solid #d5d5d5;
  background: #fff;
  overflow: hidden;
}
.tree { overflow: hidden; font-size: 15.100px; letter-spacing: -0.1px; }
.tree li {
  height: 21.560px;
  display: flex;
  align-items: center;
  gap: 3px;
  padding-left: 53px;
  position: relative;
}
.tree li.deep { padding-left: 70px; }
.tree li.hover { background: #efefef; }
.tree svg { width: 20px; height: 19px; flex: none; }
.tree .tint { filter: drop-shadow(0 0 1px #72a4dd); }
.tree .exp::before, .tw::before {
  content: "";
  position: absolute;
  left: 40px;
  border: 4.500px solid transparent;
  border-left: 5px solid #555;
  border-right: 0;
}
.vbar { display: flex; flex-direction: column; background: #e6e6e6; }
.vthumb { height: 52px; margin-top: 212px; background: #fafafa; border: 1px solid #eee; }
.vbar .btn-down { margin-top: auto; }
.hbar { display: flex; background: #e6e6e6; }
.hthumb { flex: 1; margin-right: 78px; background: #fafafa; }
.corner { background: #efefef; border: 1px solid #ddd; }
.btn-up, .btn-down, .btn-left, .btn-right {
  width: 17px;
  height: 17px;
  flex: none;
  display: flex;
  align-items: center;
  justify-content: center;
  background: #fafafa;
  border: 1px solid #e4e4e4;
}
.btn-up::before, .btn-down::before, .btn-left::before, .btn-right::before { content: ""; border: 4.500px solid transparent; }
.btn-up::before { border-bottom: 5px solid #555; border-top: 0; }
.btn-down::before { border-top: 5px solid #555; border-bottom: 0; }
.btn-left::before { border-right: 5px solid #555; border-left: 0; }
.btn-right::before { border-left: 5px solid #555; border-right: 0; }

.layer-title { margin-top: 9px; }
.layer-toolbar { gap: 7px; }
.layer-toolbar .dd { margin: 0 2px 0 -3px; }
.more { margin-left: 4px; font-size: 18px; line-height: 18px; padding-bottom: 3px; }
.layers {
  width: 233px;
  flex: 1;
  overflow: hidden;
  background: #fff;
  border: 1px solid #ddd;
  border-bottom: 0;
  margin-left: -1px;
  font: italic bold 14.300px "DejaVu Sans", sans-serif;
  font-stretch: normal;
  letter-spacing: 0;
  color: #7b7b7b;
}
.layers li { height: 20.200px; display: flex; align-items: center; overflow: hidden; position: relative; }
.layers b { width: 27px; flex: none; }
.tw::before { left: 9px; top: 6px; }
.cb { width: 18px; height: 19px; border: 1px solid #e2e2e2; background: #fff; flex: none; display: flex; }
.cb svg { width: 17px; height: 17px; }
.sw { width: 18px; height: 19px; margin: 0 5px 0 3px; border: 1px solid #777; background: #fff; flex: none; }
.lime { background: #b8cf3c; }
.green { background: #78b468; }
.brown { background: #a96e50; }
.violet { background: #6d74c6; }
.red { background: #b8444d; }
.lras { width: 20px; height: 20px; margin: 0 5px 0 4px; flex: none; }
.layers .group { font-size: 13.700px; letter-spacing: -0.300px; }
.layers .it { letter-spacing: 0.1px; }
.layers .urban { font-size: 14px; letter-spacing: -0.2px; }
.layers .limit { font-size: 14px; letter-spacing: -0.32px; }
.layers .com { font-size: 14px; letter-spacing: -0.32px; }
.layers .selected { background: #0078d7; color: #fff; font-style: normal; outline: 1px dotted #d9a45a; outline-offset: -1px; }
.layers .visible { color: #111; font-style: normal; }

.canvas { flex: 1; display: flex; flex-direction: column; background: #fff; overflow: hidden; }
.message {
  height: 39px;
  flex: none;
  display: flex;
  align-items: center;
  gap: 10px;
  padding: 0 0 5px 9px;
  background: #d9efd2;
  border-top: 2px solid #a8b5a5;
  font-size: 14.500px;
  color: #151515;
}
.message svg { width: 20px; height: 16px; }
.map { width: 140px; height: 699px; display: block; flex: none; fill: none; stroke: #5a1c22; stroke-width: 1.200; }
.map .land { fill: #b8484b; }

/* ---------- drop-down menus ---------- */
.menu, .submenu { position: absolute; top: 99px; background: #fff; line-height: 23px; font-size: 14.800px; }
.menu { left: 436px; width: 268px; height: 118px; border: 1px solid #aaa; box-shadow: 1px 2px 3px rgba(0, 0, 0, .35); }
.menu div { padding-left: 29px; position: relative; height: 23.400px; }
.menu div::after {
  content: "";
  position: absolute;
  right: 3px;
  top: 7.500px;
  border: 4.500px solid transparent;
  border-left: 5px solid #555;
  border-right: 0;
}
.menu .sel::after { border-left-color: #fff; }
.sel { background: #0078d7; color: #e9f3ff; }
.submenu { left: 703px; width: 310px; height: 150px; border: 1px solid #999; border-right: 2px solid #777; }
.submenu div { display: flex; align-items: center; gap: 5px; padding-left: 6px; height: 23.400px; }
.submenu svg { width: 19px; height: 19px; }

/* ---------- dialog ---------- */
.dialog-frame {
  position: absolute;
  left: 448px;
  top: 238px;
  width: 975px;
  height: 752px;
  background: linear-gradient(90deg, #c9c9c9 457px, #b8605f 457px) 0 100% / 100% 14px no-repeat, #b0474b;
  padding: 1px 2px 2px 1px;
}
.dialog { height: 100%; border-radius: 8px; overflow: hidden; background: #efefef; display: flex; flex-direction: column; box-shadow: -1px 0 0 #aaa; }
.dialog-title {
  height: 37px;
  flex: none;
  display: flex;
  align-items: center;
  gap: 3px;
  padding: 0 13px 0 8px;
  background: #fff;
  font: 15px "Open Sans", sans-serif;
  color: #333;
}
.dialog-title span { padding-bottom: 2px; }
.close { width: 14px; height: 14px; margin: 0 0 3px auto; }
.dialog-body { flex: 1; display: flex; flex-direction: column; padding: 14px 13px 14px 14px; }
.upper { display: flex; height: 588px; }
.params { width: 773px; display: flex; flex-direction: column; }
.tabs { display: flex; align-items: flex-end; height: 31px; }
.tab { height: 29px; line-height: 29px; padding: 0 13px; background: #e8e8e8; border: 1px solid #ddd; border-bottom: 0; font-size: 14.900px; width: 54px; }
.tab.on { height: 31px; line-height: 32px; padding-left: 14px; width: 97px; background: #fff; }
.pane { flex: 1; border: 1px solid #d3d3d3; border-bottom-color: #c9c9c9; padding: 0 3px; display: flex; flex-direction: column; }
.lab { height: 26.500px; line-height: 25px; flex: none; font-size: 14.900px; }
.field { height: 31px; flex: none; display: flex; align-items: center; }
.combo, .text-input {
  height: 26px;
  width: 661px;
  display: flex;
  align-items: center;
  padding: 0 7px 1px 3px;
  border: 1px solid #cfcfcf;
  background: linear-gradient(#fff, #f2f2f2);
  font-size: 15.100px;
}
.combo svg { width: 22px; height: 15px; }
.combo .dd, .text-input svg { margin-left: auto; }
.f-iter { width: 25px; height: 23px; margin-left: 9px; }
.f-wrench { width: 28px; height: 26px; margin-left: 8px; }
.dots { width: 28px; height: 24px; margin-left: auto; display: flex; align-items: flex-end; padding: 0 1px 2px 6px; border: 1px solid #d2d2d2; background: linear-gradient(#fff, #f2f2f2); line-height: 14px; font-size: 14px; }
.dots .dd { margin: 0 0 2px 0; }
.field.out { height: 29px; }
.text-input { width: 729px; padding-left: 1px; background: #fff; font-size: 15.100px; letter-spacing: 0; }
.text-input svg { width: 17px; height: 12px; }
.checkrow { height: 30px; flex: none; display: flex; align-items: center; gap: 6px; font-size: 14.900px; padding-bottom: 1px; }
.off { color: #8d8d8d; }
.box { width: 18px; height: 18px; border: 1px solid #ddd; background: #fff; display: flex; }
.off .box { background: #f0f0f0; border-color: #d4d4d4; }
.box svg { width: 16px; height: 16px; }
.field.out + .checkrow { height: 33px; }

.splitter { width: 9px; position: relative; }
.splitter::before { content: ""; position: absolute; left: 2px; top: 0; border: 3px solid transparent; border-right: 4px solid #555; border-left: 0; }
.help { flex: 1; display: flex; background: #fff; border: 1px solid #d8d8d8; }
.help-text { flex: 1; padding: 3px 0 0 3px; color: #777; font-size: 14.900px; line-height: 18.400px; overflow: hidden; }
.help h2 { margin: 0 0 6px; font-size: 23.200px; line-height: 27.500px; color: #4c4c4c; }
.help p { margin: 0 0 7px; }
.help-bar { width: 19px; display: flex; flex-direction: column; justify-content: space-between; background: #f7f7f7; border-left: 1px solid #e5e5e5; }
.progress-row { display: flex; align-items: center; justify-content: space-between; margin-top: 34px; }
.progress { width: 880px; height: 24px; border: 1px solid #ccc; background: #fff; text-align: center; line-height: 23px; font-size: 15px; }
.btn { height: 28px; padding: 0; border: 1px solid #d0d0d0; background: linear-gradient(#fff, #f2f2f2); font: inherit; font-size: 14.500px; letter-spacing: inherit; color: #222; }
.dis { width: 57px; color: #8d8d8d; }
.buttons { display: flex; margin-top: 7px; }
.batch { width: 227px; margin-right: auto; font-size: 15.100px; }
.run { width: 52px; border-color: #8fc8f5; background: #eaf4fc; }
.w2 { width: 51px; margin-left: 8px; }
.w3 { width: 52px; margin-left: 6px; }
```
